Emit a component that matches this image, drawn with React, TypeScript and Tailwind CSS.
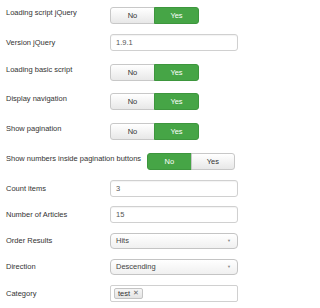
const base = "font-['Liberation_Sans',Arial,sans-serif] text-[7.5px]";

type Row =
  | { kind: "toggle"; label: string; value: "yes" | "no"; mt: string; wide?: boolean }
  | { kind: "input"; label: string; value: string; mt: string }
  | { kind: "select"; label: string; value: string; mt: string }
  | { kind: "tags"; label: string; tags: string[]; mt: string };

const rows: Row[] = [
  { kind: "toggle", label: "Loading script jQuery", value: "yes", mt: "mt-[7px]" },
  { kind: "input", label: "Version jQuery", value: "1.9.1", mt: "mt-[10px]" },
  { kind: "toggle", label: "Loading basic script", value: "yes", mt: "mt-[13px]" },
  { kind: "toggle", label: "Display navigation", value: "yes", mt: "mt-[12px]" },
  { kind: "toggle", label: "Show pagination", value: "yes", mt: "mt-[13px]" },
  {
    kind: "toggle",
    label: "Show numbers inside pagination buttons",
    value: "no",
    mt: "mt-[13px]",
    wide: true,
  },
  { kind: "input", label: "Count items", value: "3", mt: "mt-[10px]" },
  { kind: "input", label: "Number of Articles", value: "15", mt: "mt-[9px]" },
  { kind: "select", label: "Order Results", value: "Hits", mt: "mt-[10px]" },
  { kind: "select", label: "Direction", value: "Descending", mt: "mt-[10px]" },
  { kind: "tags", label: "Category", tags: ["test"], mt: "mt-[10px]" },
];

const activeBtn = "border-[#3d963d] bg-[#46a546] text-white";
const idleBtn = "border-[#c8c8c8] bg-linear-to-b from-white to-[#e8e8e8] text-[#333]";

function Toggle({ value, wide }: { value: "yes" | "no"; wide?: boolean }) {
  return (
    <div className={`flex h-[17px] ${wide ? "w-[88px]" : "w-[89px]"}`}>
      <span
        className={`flex flex-1 items-center justify-center rounded-l-[3px] border ${
          value === "no" ? activeBtn : idleBtn
        }`}
      >
        No
      </span>
      <span
        className={`-ml-px flex flex-1 items-center justify-center rounded-r-[3px] border ${
          value === "yes" ? activeBtn : idleBtn
        }`}
      >
        Yes
      </span>
    </div>
  );
}

function Field({ row }: { row: Row }) {
  if (row.kind === "toggle") return <Toggle value={row.value} wide={row.wide} />;
  if (row.kind === "input")
    return (
      <div className="flex h-[17px] w-[128px] items-center rounded-[3px] border border-[#d0d0d0] bg-white px-[5px] text-[#555] shadow-[inset_0_1px_1px_rgba(0,0,0,0.05)]">
        {row.value}
      </div>
    );
  if (row.kind === "select")
    return (
      <div className="flex h-[16px] w-[128px] items-center justify-between rounded-[4px] border border-[#c4c4c4] bg-linear-to-b from-white to-[#f0f0f0] pr-[6px] pl-[5px] text-[#444]">
        <span>{row.value}</span>
        <span className="text-[4px] text-[#888]">▼</span>
      </div>
    );
  return (
    <div className="flex h-[17px] w-[128px] items-center rounded-[2px] border border-[#d0d0d0] bg-white px-[3px]">
      {row.tags.map((t) => (
        <span
          key={t}
          className="flex h-[11px] items-center gap-[3px] rounded-[2px] border border-[#c4c4c4] bg-linear-to-b from-[#f6f6f6] to-[#e4e4e4] px-[3px] text-[#333]"
        >
          {t}
          <span className="text-[7px] text-[#666]">✕</span>
        </span>
      ))}
    </div>
  );
}

export default function App() {
  return (
    <div className={`${base} h-[308px] w-[250px] overflow-hidden bg-white pl-[6px] text-[#333]`}>
      {rows.map((row) => {
        const isToggle = row.kind === "toggle";
        const wide = isToggle && row.wide;
        return (
          <div
            key={row.label}
            className={`flex ${row.mt} ${isToggle ? "items-start" : "items-center"}`}
          >
            <label
              className={`leading-[10px] ${isToggle ? "pt-px" : ""} ${
                wide ? "mr-[6px] whitespace-nowrap" : "w-[104px] shrink-0"
              }`}
            >
              {row.label}
            </label>
            <Field row={row} />
          </div>
        );
      })}
    </div>
  );
}
